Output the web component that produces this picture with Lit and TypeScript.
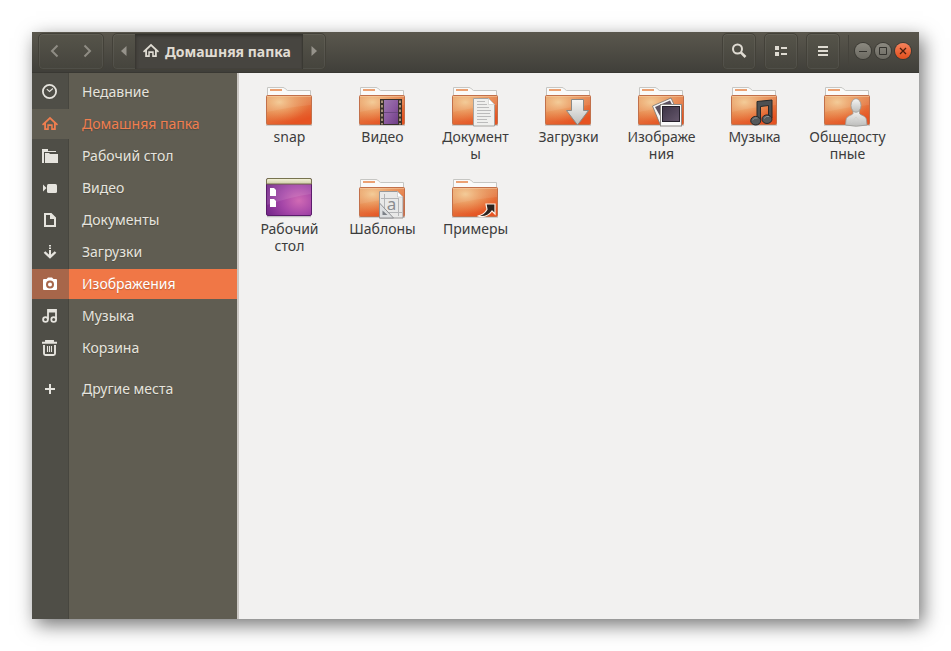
import { LitElement, html, svg, css } from "lit";
import { customElement, property } from "lit/decorators.js";
import { classMap } from "lit/directives/class-map.js";

const house = svg`<path d="M8 .8 0 8.2 1 9.5 2.2 8.6V14h4.6v-4h2.4v4h4.6V8.6L15 9.5 16 8.2ZM8 3.3l4 3.700v5.200h-1.300V8.200H5.300v4H4V7Z" fill="currentColor" fill-rule="evenodd"/>`;

const symbols: Record<string, unknown> = {
  recent: svg`<circle cx="7.500" cy="7.500" r="6.600" fill="none" stroke="currentColor" stroke-width="1.800"/><path d="m4.800 5.200 2.700 2.300 3.400-3" fill="none" stroke="currentColor" stroke-width="1.100"/>`,
  home: house,
  desktop: svg`<path d="M0 1h6v2h8v1H2v11H0Z" fill="currentColor"/><path d="M3 15V5h4l1 1h8v9Z" fill="currentColor"/>`,
  video: svg`<path d="M1 4.500 4.500 8 1 11.500Z" fill="currentColor"/><rect x="5" y="4" width="10" height="9" rx="1.500" fill="currentColor"/>`,
  documents: svg`<path d="M3 2h6l4 4v8H3Z" fill="none" stroke="currentColor" stroke-width="2"/><path d="M8 2v5h5V6L9 2Z" fill="currentColor"/>`,
  downloads: svg`<path d="M7 1h2v1.500H7zM7 3.500h2V5H7zM7 6h2v6H7z" fill="currentColor"/><path d="m2.500 8 5.500 5.200L13.500 8" fill="none" stroke="currentColor" stroke-width="2.400"/>`,
  pictures: svg`<path d="M2 3h2.500L6 1.500h4L11.500 3H14q1 0 1 1v9q0 1-1 1H2q-1 0-1-1V4q0-1 1-1Zm6 1.500a4 4 0 1 0 0 8 4 4 0 0 0 0-8Zm0 2a2 2 0 1 1 0 4 2 2 0 0 1 0-4Z" fill="currentColor" fill-rule="evenodd"/>`,
  music: svg`<path d="M6 11.500V2h8v9" fill="none" stroke="currentColor" stroke-width="1.800"/><path d="M6 2h8v2.500H6Z" fill="currentColor"/><circle cx="3.500" cy="11.500" r="2.400" fill="none" stroke="currentColor" stroke-width="1.800"/><circle cx="11.700" cy="11.500" r="2.400" fill="none" stroke="currentColor" stroke-width="1.800"/>`,
  trash: svg`<path d="M0 2.800h15M4 2.500V1h7v1.500M2 5v8.500Q2 15 3.500 15h8q1.500 0 1.500-1.500V5" fill="none" stroke="currentColor" stroke-width="1.900"/><path d="M5.500 6v6M7.500 6v6M9.500 6v6" stroke="currentColor" stroke-width="1.100"/>`,
  other: svg`<path d="M7 3h2v4h4v2H9v4H7V9H3V7h4Z" fill="currentColor"/>`,
};

const emblems: Record<string, unknown> = {
  plain: svg``,
  film: svg`<rect x="22" y="18" width="22" height="26" fill="#3a322b"/><rect x="26" y="19" width="14" height="24" fill="url(#film)"/>
    <path d="M26 31.500h14" stroke="#6c4780"/><path d="M24 19.500v24M42 19.500v24" stroke="#a8937b" stroke-width="2" stroke-dasharray="2.500 2"/>`,
  paper: svg`<path d="M22.500 17.500h15l6 6v21.500h-21Z" fill="#efefed" stroke="#a5a4a0"/><path d="M37.500 17.500v6h6Z" fill="#fff" stroke="#c8c8c5" stroke-width=".6"/>
    <path d="M26 20.500h8M26 23.500h10M26 26.500h12M26 29.500h14M26 32.500h13M26 35.500h14M26 38.500h10M26 41.500h11" stroke="#bbb"/>`,
  arrow: svg`<path d="M27.500 18.500h12v11h5L33.500 44 22.500 29.500h5Z" fill="url(#metal)" stroke="#8a8986" stroke-linejoin="round"/>`,
  photos: svg`<path d="m15.500 25 18.500-8 8 17-19 9Z" fill="#f5f5f5" stroke="#77736f" stroke-width=".8"/><path d="m18 26 15-6.500 6 12-14 7Z" fill="#5b5160"/>
    <rect x="23.500" y="23.500" width="21" height="21.500" fill="#fafafa" stroke="#8d8985"/><rect x="25.500" y="25.500" width="17" height="15" fill="url(#photo)" stroke="#25202b"/>`,
  note: svg`<path d="M27 20.500 42 19v18h-3.500V24.500l-8 1V40H27Z" fill="#4c5052" stroke="#26292a"/><ellipse cx="25.700" cy="39.700" rx="5" ry="4.300" fill="#55595b" stroke="#26292a"/><ellipse cx="37" cy="38.200" rx="5" ry="4.300" fill="#55595b" stroke="#26292a"/>
    <path d="M22.500 39q2-3 5-2M34 37.500q2-3 5-2" fill="none" stroke="#9da1a3" stroke-width=".8"/>`,
  person: svg`<path d="M30 29v3.500c-1 2-6.500 2-7 6.500l-.5 5q10.500 2.500 21.500 0l-.5-5c-.5-4.500-6-4.500-7-6.500V29Z" fill="url(#metal)" stroke="#9a9996" stroke-width=".8"/><ellipse cx="33" cy="24.500" rx="5" ry="6.800" fill="url(#metal)" stroke="#9a9996" stroke-width=".8"/>
    <path d="m33 36-5 6M33 36l5 6" stroke="#cfcfcd" stroke-width=".8"/>`,
  template: svg`<path d="M21.500 18.500h18l5.500 5.500v21H21.500Z" fill="#e9e9e8" stroke="#999"/><path d="M39.500 18.500V24H45Z" fill="#fff" stroke="#bbb" stroke-width=".6"/>
    <path d="M26.500 21v20M40.500 25v18M23 25.500h18M28 39.500h16" stroke="#b4b5b7"/><text class="glyph" x="33.500" y="37">a</text>
    <path d="M21.500 30v15h14Z" fill="#dcdee0" fill-opacity=".9" stroke="#909194"/><path d="M24.500 37.500V42h5Z" fill="#7c8087"/>`,
  link: svg`<path d="M35 31h9v10l-3-3c-3.500 5-8.500 6.500-14.500 5 4-.5 7.500-3 9.500-6.500Z" fill="#2b2320" stroke="#fff1e5" stroke-width="1.200"/>`,
};

const folderIcon = (emblem: string) => svg`
  <svg class="picture" viewBox="0 0 49 47" aria-hidden="true">
    <defs>
      <linearGradient id="body" x1="0" y1="0" x2=".5" y2="1"><stop offset="0" stop-color="#e2975c"/><stop offset=".5" stop-color="#e47f47"/><stop offset="1" stop-color="#e65322"/></linearGradient>
      <radialGradient id="glow" cx=".28" cy=".22" r=".7"><stop offset="0" stop-color="#f4cf98" stop-opacity=".9"/><stop offset="1" stop-color="#f2a15e" stop-opacity="0"/></radialGradient>
      <linearGradient id="film" x1="0" y1="0" x2="1" y2="1"><stop offset="0" stop-color="#9c79ae"/><stop offset=".5" stop-color="#8c5ba0"/><stop offset="1" stop-color="#6f3e86"/></linearGradient>
      <linearGradient id="metal" x1="0" y1="0" x2="0" y2="1"><stop offset="0" stop-color="#f5f5f4"/><stop offset="1" stop-color="#bdbdbb"/></linearGradient>
      <linearGradient id="photo" x1="0" y1="0" x2="1" y2="1"><stop offset="0" stop-color="#3c3345"/><stop offset="1" stop-color="#66586d"/></linearGradient>
    </defs>
    <path d="M1 44h46" stroke="#000" stroke-opacity=".15" stroke-width="2"/>
    <path d="M2.500 17V6.500H18q1.500 0 2.500 1.500l2 1.500h23V17Z" fill="#fafaf9" stroke="#c6c6c3"/>
    <path d="M5 9h12" stroke="#eba173" stroke-width="2"/>
    <rect x="1.500" y="14.500" width="45" height="29" rx="1" fill="url(#body)" stroke="#c2704a"/>
    <rect x="2" y="15" width="44" height="28" fill="url(#glow)"/>
    <path d="M2 15.500h44" stroke="#f8d0a4" stroke-opacity=".5"/>
    <path d="M2 15h44v9Q25 26 2 31Z" fill="#fff" fill-opacity=".08"/>
    ${emblems[emblem]}
  </svg>`;

const desktopIcon = svg`
  <svg class="picture" viewBox="0 0 49 47" aria-hidden="true">
    <defs>
      <radialGradient id="wall" cx=".72" cy=".6" r=".85"><stop offset="0" stop-color="#d06ab4"/><stop offset=".45" stop-color="#a546a8"/><stop offset="1" stop-color="#6d2285"/></radialGradient>
      <linearGradient id="bar" x1="0" y1="0" x2="0" y2="1"><stop offset="0" stop-color="#f5f3da"/><stop offset="1" stop-color="#cfcca9"/></linearGradient>
    </defs>
    <path d="M2 43.500h44" stroke="#000" stroke-opacity=".2" stroke-width="1.500"/>
    <rect x="1.500" y="5.500" width="45" height="37" rx="1.500" fill="url(#wall)" stroke="#5b1c6c"/>
    <path d="M1.500 11V7q0-1.500 1.500-1.500h42q1.500 0 1.500 1.500v4Z" fill="url(#bar)" stroke="#77734f"/>
    <path d="M2 12h44v9Q25 24 2 32Z" fill="#fff" fill-opacity=".1"/>
    <path d="M5 15h4l2 2v6H5ZM5 26h4l2 2v6H5Z" fill="#fff"/>
  </svg>`;

interface Place { icon: string; label: string; state?: "home" | "selected"; apart?: boolean }
const places: Place[] = [
  { icon: "recent", label: "Недавние" },
  { icon: "home", label: "Домашняя папка", state: "home" },
  { icon: "desktop", label: "Рабочий стол" },
  { icon: "video", label: "Видео" },
  { icon: "documents", label: "Документы" },
  { icon: "downloads", label: "Загрузки" },
  { icon: "pictures", label: "Изображения", state: "selected" },
  { icon: "music", label: "Музыка" },
  { icon: "trash", label: "Корзина" },
  { icon: "other", label: "Другие места", apart: true },
];

const folders = [
  { icon: "plain", label: "snap" },
  { icon: "film", label: "Видео" },
  { icon: "paper", label: "Документ\nы" },
  { icon: "arrow", label: "Загрузки" },
  { icon: "photos", label: "Изображе\nния" },
  { icon: "note", label: "Музыка" },
  { icon: "person", label: "Общедосту\nпные" },
  { icon: "desktop", label: "Рабочий\nстол" },
  { icon: "template", label: "Шаблоны" },
  { icon: "link", label: "Примеры" },
];

@customElement("title-bar")
class TitleBar extends LitElement {
  static styles = css`
    :host {
      display: flex; align-items: center; height: 41px; box-sizing: border-box;
      padding: 0 8px 2px 6px; color: #dfdbd2; border-bottom: 1px solid #393833;
      background: linear-gradient(#5a574d, #504e46 40%, #403f3a);
    }
    button {
      margin: 0; padding: 0; border: 0; background: none; color: inherit; font: inherit;
      display: flex; align-items: center; justify-content: center; height: 100%;
    }
    .group {
      display: flex; height: 37px; box-sizing: border-box; border: 1px solid #434139; border-radius: 5px;
      box-shadow: inset 0 0 0 1px rgba(255, 255, 255, 0.06);
      background: linear-gradient(#56544a, #45443d);
    }
    .history { width: 66px; color: #8f8c84; }
    .history button { flex: 1; }
    .path { margin-left: 8px; color: #96938b; }
    .path .step { width: 22px; }
    .path .current {
      gap: 6px; padding: 0 12px 0 8px; color: #e0dcd3; font-weight: 700; font-size: 14px;
      background: #474540; box-shadow: inset 1px 2px 3px #33322d, inset -1px 0 1px #3b3a35;
    }
    .tools { display: flex; gap: 8px; margin-left: auto; }
    .tools .group { width: 34px; }
    .controls {
      display: flex; align-items: center; gap: 4px; height: 32px; margin-left: 8px; padding-left: 6px;
      border-left: 1px solid #45433c;
    }
    .controls button {
      width: 16px; height: 16px; border-radius: 50%; color: #34332e;
      background: linear-gradient(#8b8980, #6c6a62); box-shadow: 0 0 0 1px #3b3a34;
    }
    .controls .close { background: linear-gradient(#f5825c, #e24f1c); color: #4a1d0c; }
    svg { display: block; flex: none; }
    .stroke { fill: none; stroke: currentColor; }
  `;

  render() {
    return html`
      <div class="group history">
        <button aria-label="Назад"><svg class="stroke" width="16" height="16" stroke-width="2"><path d="M10.500 2.500 5 8l5.500 5.500"/></svg></button>
        <button aria-label="Вперёд"><svg class="stroke" width="16" height="16" stroke-width="2"><path d="M5.500 2.500 11 8l-5.500 5.500"/></svg></button>
      </div>
      <div class="group path">
        <button class="step" aria-label="Выше"><svg width="6" height="10"><path d="M5.500 0v10L0 5Z" fill="currentColor"/></svg></button>
        <button class="current"><svg width="16" height="16">${house}</svg>Домашняя папка</button>
        <button class="step" aria-label="Ниже"><svg width="6" height="10"><path d="M.5 0v10L6 5Z" fill="currentColor"/></svg></button>
      </div>
      <div class="tools">
        <button class="group" aria-label="Поиск"><svg class="stroke" width="16" height="16"><circle cx="6.500" cy="6" r="4.500" stroke-width="2"/><path d="m9.800 9.300 4.700 4.700" stroke-width="2.600"/></svg></button>
        <button class="group" aria-label="Вид"><svg width="16" height="16" fill="currentColor"><path d="M2 3h4v4H2zM2 9h4v4H2zM8 4h6v2H8zM8 10h6v2H8z"/></svg></button>
        <button class="group" aria-label="Меню"><svg width="16" height="16" fill="currentColor"><path d="M3 3h10v2H3zM3 7h10v2H3zM3 11h10v2H3z"/></svg></button>
      </div>
      <div class="controls">
        <button aria-label="Свернуть"><svg class="stroke" width="16" height="16"><path d="M4 8.500h8"/></svg></button>
        <button aria-label="Развернуть"><svg class="stroke" width="16" height="16"><path d="M4.500 4.500h7v7h-7z"/></svg></button>
        <button class="close" aria-label="Закрыть"><svg class="stroke" width="16" height="16" stroke-width="1.300"><path d="m5 5 6 6M11 5l-6 6"/></svg></button>
      </div>`;
  }
}

@customElement("place-link")
class PlaceLink extends LitElement {
  @property({ attribute: false }) place!: Place;

  static styles = css`
    :host { display: block; }
    a {
      display: grid; grid-template-columns: 37px 1fr; height: 30px; align-items: stretch;
      color: #e6e4de; text-decoration: none; font-size: 14px; line-height: 30px;
    }
    .mark { display: flex; align-items: center; padding-left: 10px; }
    .label { padding-left: 13px; white-space: nowrap; text-shadow: 0 1px 1px rgba(0, 0, 0, 0.2); }
    .home { color: #f07e4f; background: #605d52; }
    .selected { color: #fff; }
    .selected .mark { background: #a7664a; }
    .selected .label { background: #f07746; }
    svg { display: block; }
  `;

  render() {
    const { icon, label, state } = this.place;
    return html`<a href="#" class=${classMap({ home: state === "home", selected: state === "selected" })}>
      <span class="mark"><svg width="16" height="16" aria-hidden="true">${symbols[icon]}</svg></span>
      <span class="label">${label}</span>
    </a>`;
  }
}

@customElement("app-root")
class AppRoot extends LitElement {
  static styles = css`
    :host {
      display: flex; min-height: 100vh; box-sizing: border-box; padding: 32px; background: #fff;
      font-family: "Noto Sans", sans-serif;
    }
    .window {
      flex: 1; display: flex; flex-direction: column; background: #f2f1f0;
      box-shadow: 4px 6px 18px rgba(0, 0, 0, 0.55);
    }
    .main { flex: 1; display: flex; }
    .places {
      flex: none; width: 205px; box-sizing: border-box; padding-top: 4px;
      display: flex; flex-direction: column; gap: 2px;
      background: linear-gradient(90deg, #4f4e47 36px, #47463f 36px 37px, #605d52 37px);
    }
    .apart { margin-top: 9px; }
    .files {
      flex: 1; display: grid; grid-template-columns: repeat(auto-fill, 93px); align-content: start;
      row-gap: 11px; padding: 8px 4px; border-left: 2px solid #cbc7c3;
    }
    .file {
      display: flex; flex-direction: column; align-items: center; min-height: 81px; padding: 0;
      border: 0; background: none; font: inherit; font-size: 14px; line-height: 17px; color: #3c3c3c;
      white-space: pre-line; text-align: center;
    }
    .picture { display: block; width: 49px; height: 47px; }
    .glyph { font: 17px "Noto Sans", sans-serif; fill: #8b8d90; text-anchor: middle; }
  `;

  render() {
    return html`
      <div class="window">
        <title-bar></title-bar>
        <div class="main">
          <nav class="places">
            ${places.map((p) => html`<place-link class=${classMap({ apart: !!p.apart })} .place=${p}></place-link>`)}
          </nav>
          <main class="files">
            ${folders.map((f) => html`<button class="file">${f.icon === "desktop" ? desktopIcon : folderIcon(f.icon)}<span>${f.label}</span></button>`)}
          </main>
        </div>
      </div>`;
  }
}
